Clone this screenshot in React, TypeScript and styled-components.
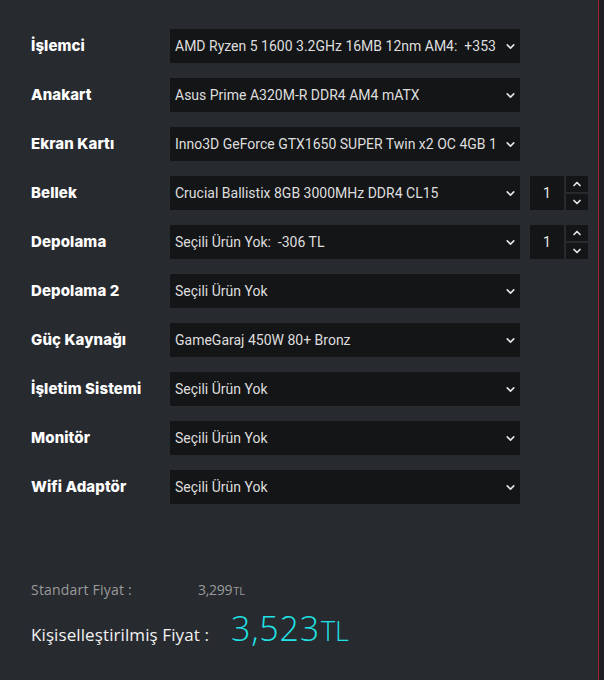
import styled, { createGlobalStyle } from 'styled-components';
import { ChevronDown, ChevronUp } from 'lucide-react';

const GlobalStyle = createGlobalStyle`
    html, body {
        margin: 0;
        padding: 0;
        background: #1d1f23;
    }
    * {
        box-sizing: border-box;
    }
`;

const Page = styled.div`
    display: flex;
    width: 604px;
    height: 680px;
`;

const Panel = styled.div`
    width: 599px;
    height: 100%;
    background: #272a2f;
    border-right: 1px solid #a8222c;
    padding: 29px 0 0 31px;
    display: flex;
    flex-direction: column;
`;

const Form = styled.div`
    display: flex;
    flex-direction: column;
    gap: 15px;
`;

const Row = styled.div`
    display: flex;
    align-items: center;
    height: 34px;
`;

const Label = styled.div`
    width: 139px;
    margin-top: -2px;
    font-family: Inter, "Liberation Sans", sans-serif;
    font-weight: 800;
    font-size: 15px;
    color: #ffffff;
    letter-spacing: 0.1px;
`;

const Select = styled.div`
    width: 350px;
    height: 34px;
    background: #141517;
    display: flex;
    align-items: center;
    padding: 0 3px 0 5px;
    color: #dedede;
    font-family: Roboto, "Liberation Sans", sans-serif;
    font-size: 14px;
`;

const SelectText = styled.span`
    flex: 1;
    white-space: pre;
    overflow: hidden;
`;

const Chevron = styled.span`
    width: 14px;
    display: flex;
    justify-content: center;
    color: #e4e4e4;
`;

const Qty = styled.div`
    margin-left: 10px;
    width: 34px;
    height: 34px;
    background: #141517;
    display: flex;
    align-items: center;
    justify-content: center;
    color: #e8e8e8;
    font-family: Roboto, "Liberation Sans", sans-serif;
    font-size: 14px;
`;

const Spinner = styled.div`
    margin-left: 2px;
    display: flex;
    flex-direction: column;
    gap: 2px;
`;

const SpinButton = styled.div`
    width: 22px;
    height: 16px;
    background: #141517;
    display: flex;
    align-items: center;
    justify-content: center;
    color: #e4e4e4;
`;

const Prices = styled.div`
    margin-top: 76px;
    display: flex;
    flex-direction: column;
    gap: 6px;
    font-family: "Open Sans", "Liberation Sans", sans-serif;
`;

const PriceRow = styled.div`
    display: flex;
    align-items: baseline;
`;

const PriceLabel = styled.span<{ $big?: boolean }>`
    width: ${(p) => (p.$big ? '200px' : '167px')};
    font-size: ${(p) => (p.$big ? '17px' : '14px')};
    color: ${(p) => (p.$big ? '#f2f2f2' : '#9a9a9a')};
    letter-spacing: ${(p) => (p.$big ? '0.1px' : '0.2px')};
`;

const Amount = styled.span<{ $big?: boolean }>`
    font-size: ${(p) => (p.$big ? '34px' : '14px')};
    font-weight: ${(p) => (p.$big ? 300 : 400)};
    color: ${(p) => (p.$big ? '#1fe3e6' : '#9a9a9a')};
    letter-spacing: ${(p) => (p.$big ? '0.8px' : '-0.3px')};
`;

const Currency = styled.span<{ $big?: boolean }>`
    font-size: ${(p) => (p.$big ? '27px' : '11px')};
    margin-left: 1px;
    letter-spacing: 0;
`;

const parts = [
    { label: 'İşlemci', value: 'AMD Ryzen 5 1600 3.2GHz 16MB 12nm AM4:  +353' },
    { label: 'Anakart', value: 'Asus Prime A320M-R DDR4 AM4 mATX' },
    { label: 'Ekran Kartı', value: 'Inno3D GeForce GTX1650 SUPER Twin x2 OC 4GB 1' },
    { label: 'Bellek', value: 'Crucial Ballistix 8GB 3000MHz DDR4 CL15', qty: 1 },
    { label: 'Depolama', value: 'Seçili Ürün Yok:  -306 TL', qty: 1 },
    { label: 'Depolama 2', value: 'Seçili Ürün Yok' },
    { label: 'Güç Kaynağı', value: 'GameGaraj 450W 80+ Bronz' },
    { label: 'İşletim Sistemi', value: 'Seçili Ürün Yok' },
    { label: 'Monitör', value: 'Seçili Ürün Yok' },
    { label: 'Wifi Adaptör', value: 'Seçili Ürün Yok' },
];

function App() {
    return (
        <Page>
            <GlobalStyle />
            <Panel>
                <Form>
                    {parts.map((part) => (
                        <Row key={part.label}>
                            <Label>{part.label}</Label>
                            <Select>
                                <SelectText>{part.value}</SelectText>
                                <Chevron>
                                    <ChevronDown size={13} strokeWidth={3} />
                                </Chevron>
                            </Select>
                            {part.qty !== undefined && (
                                <>
                                    <Qty>{part.qty}</Qty>
                                    <Spinner>
                                        <SpinButton>
                                            <ChevronUp size={12} strokeWidth={3.5} />
                                        </SpinButton>
                                        <SpinButton>
                                            <ChevronDown size={12} strokeWidth={3.5} />
                                        </SpinButton>
                                    </Spinner>
                                </>
                            )}
                        </Row>
                    ))}
                </Form>
                <Prices>
                    <PriceRow>
                        <PriceLabel>Standart Fiyat :</PriceLabel>
                        <Amount>
                            3,299<Currency>TL</Currency>
                        </Amount>
                    </PriceRow>
                    <PriceRow>
                        <PriceLabel $big>Kişiselleştirilmiş Fiyat :</PriceLabel>
                        <Amount $big>
                            3,523<Currency $big>TL</Currency>
                        </Amount>
                    </PriceRow>
                </Prices>
            </Panel>
        </Page>
    );
}

export default App;
